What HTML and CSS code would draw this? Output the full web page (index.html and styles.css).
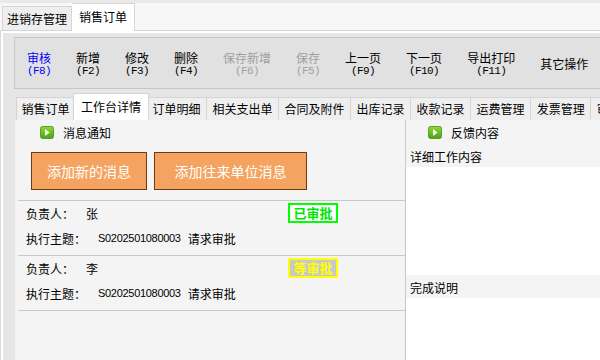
FILE: index.html
```html
<!DOCTYPE html>
<html lang="zh">
<head>
    <meta charset="UTF-8">
    <title>销售订单</title>
    <link rel="stylesheet" href="styles.css">
</head>
<body>
    <div class="top-bar">
        <div class="tab">进销存管理</div>
        <div class="tab active">销售订单</div>
    </div>

    <div class="main">
        <div class="toolbar">
            <div class="tool primary"><span>审核</span><span class="key">(F8)</span></div>
            <div class="tool"><span>新增</span><span class="key">(F2)</span></div>
            <div class="tool"><span>修改</span><span class="key">(F3)</span></div>
            <div class="tool"><span>删除</span><span class="key">(F4)</span></div>
            <div class="tool off"><span>保存新增</span><span class="key">(F6)</span></div>
            <div class="tool off"><span>保存</span><span class="key">(F5)</span></div>
            <div class="tool"><span>上一页</span><span class="key">(F9)</span></div>
            <div class="tool"><span>下一页</span><span class="key">(F10)</span></div>
            <div class="tool"><span>导出打印</span><span class="key">(F11)</span></div>
            <div class="tool"><span>其它操作</span></div>
        </div>

        <div class="sub-tabs">
            <div class="sub-tab">销售订单</div>
            <div class="sub-tab active">工作台详情</div>
            <div class="sub-tab">订单明细</div>
            <div class="sub-tab">相关支出单</div>
            <div class="sub-tab">合同及附件</div>
            <div class="sub-tab">出库记录</div>
            <div class="sub-tab">收款记录</div>
            <div class="sub-tab">运费管理</div>
            <div class="sub-tab">发票管理</div>
            <div class="sub-tab">审批记录</div>
        </div>

        <div class="panel">
            <div class="left">
                <div class="sec-head">
                    <svg class="play-icon" width="14" height="13" viewBox="0 0 14 13">
                        <defs>
                            <linearGradient id="g1" x1="0" y1="0" x2="0" y2="1">
                                <stop offset="0" stop-color="#8fd83c"/>
                                <stop offset="1" stop-color="#4f9e18"/>
                            </linearGradient>
                        </defs>
                        <rect x="0.5" y="0.5" width="13" height="12" rx="2" fill="url(#g1)" stroke="#58a020"/>
                        <path d="M5 3 L9.5 6.5 L5 10 Z" fill="#f4ffe0"/>
                    </svg>
                    <span>消息通知</span>
                </div>
                <div class="actions">
                    <button class="action action-new">添加新的消息</button>
                    <button class="action action-unit">添加往来单位消息</button>
                </div>
                <div class="msg-list">
                    <div class="msg">
                        <div class="msg-row">
                            <span class="msg-label">负责人：</span>
                            <span>张</span>
                            <span class="badge badge-done">已审批</span>
                        </div>
                        <div class="msg-row">
                            <span class="msg-label">执行主题：</span>
                            <span class="code">S0202501080003</span>
                            <span>请求审批</span>
                        </div>
                    </div>
                    <div class="msg">
                        <div class="msg-row">
                            <span class="msg-label">负责人：</span>
                            <span>李</span>
                            <span class="badge badge-wait">等审批</span>
                        </div>
                        <div class="msg-row">
                            <span class="msg-label">执行主题：</span>
                            <span class="code">S0202501080003</span>
                            <span>请求审批</span>
                        </div>
                    </div>
                </div>
            </div>

            <div class="right">
                <div class="sec-head">
                    <svg class="play-icon" width="14" height="13" viewBox="0 0 14 13">
                        <defs>
                            <linearGradient id="g2" x1="0" y1="0" x2="0" y2="1">
                                <stop offset="0" stop-color="#8fd83c"/>
                                <stop offset="1" stop-color="#4f9e18"/>
                            </linearGradient>
                        </defs>
                        <rect x="0.5" y="0.5" width="13" height="12" rx="2" fill="url(#g2)" stroke="#58a020"/>
                        <path d="M5 3 L9.5 6.5 L5 10 Z" fill="#f4ffe0"/>
                    </svg>
                    <span>反馈内容</span>
                </div>
                <div class="field-label">详细工作内容</div>
                <div class="field-box"></div>
                <div class="field-label">完成说明</div>
                <div class="field-box grow"></div>
            </div>
        </div>
    </div>
</body>
</html>
```

FILE: styles.css
```css
* {
    margin: 0;
    padding: 0;
    box-sizing: border-box;
}

body {
    font-family: "Noto Sans CJK SC", sans-serif;
    font-size: 12px;
    color: #000;
    background: #f0f0f0;
    width: 600px;
    height: 360px;
    overflow: hidden;
}

/* 顶部页签 */
.top-bar {
    height: 31px;
    display: flex;
    align-items: flex-end;
    padding-left: 2px;
    background: #f7f7f7;
    border-top: 3px solid #e9e9e9;
    border-bottom: 1px solid #d6d6d6;
}

.tab {
    height: 24px;
    line-height: 23px;
    padding: 0 4px;
    background: #eeeeee;
    border: 1px solid #d6d6d6;
    border-bottom: none;
    white-space: nowrap;
}

.tab.active {
    height: 28px;
    line-height: 26px;
    padding: 0 7px;
    margin-bottom: -1px;
    background: #fff;
    border-left: none;
}

.main {
    height: 329px;
    display: flex;
    flex-direction: column;
    padding: 6px 0 0 13px;
    background: #e6e6e6;
    border-left: 1px solid #dadada;
    box-shadow: inset 2px 2px #fff;
}

/* 工具栏 */
.toolbar {
    height: 52px;
    flex-shrink: 0;
    display: flex;
    align-items: center;
    gap: 25px;
    padding: 2px 0 0 12px;
    background: #e1e1e1;
    border: 1px solid #c6c6c6;
    border-right: none;
}

.tool {
    display: flex;
    flex-direction: column;
    align-items: center;
    line-height: 14px;
    white-space: nowrap;
}

.tool.primary {
    color: #0000ff;
}

.tool.off {
    color: #a0a0a0;
}

.key {
    font-family: "Liberation Mono", monospace;
    font-size: 11px;
    line-height: 13px;
    letter-spacing: -0.6px;
}

/* 子页签 */
.sub-tabs {
    height: 31px;
    flex-shrink: 0;
    display: flex;
    align-items: flex-end;
    padding-left: 2px;
    overflow: hidden;
}

.sub-tab {
    height: 23px;
    line-height: 22px;
    padding: 0 5.5px;
    background: #efefef;
    border: 1px solid #d4d4d4;
    border-bottom: none;
    border-left: none;
    white-space: nowrap;
}

.sub-tab:first-child {
    border-left: 1px solid #d4d4d4;
    padding: 0 4.5px;
}

.sub-tab.active {
    position: relative;
    height: 27px;
    line-height: 26px;
    padding: 0 7px;
    margin: 0 -2px;
    background: #fff;
    border-left: 1px solid #d4d4d4;
}

/* 内容区 */
.panel {
    flex: 1;
    display: flex;
    margin-left: 1px;
    background: #f4f4f4;
}

.left {
    width: 391px;
    padding-left: 3px;
    border-right: 1px solid #c8c8c8;
}

.right {
    flex: 1;
    display: flex;
    flex-direction: column;
}

.sec-head {
    height: 24px;
    display: flex;
    align-items: center;
    gap: 9px;
    padding-left: 22px;
}

.play-icon {
    display: block;
}

.actions {
    display: flex;
    gap: 7px;
    padding: 8px 0 10px 13px;
}

.action {
    height: 38px;
    font-family: inherit;
    font-size: 14px;
    color: #fff;
    background: #f4a460;
    border: 1px solid #6e3a0e;
}

.action-new {
    width: 116px;
}

.action-unit {
    width: 153px;
}

.msg-list {
    border-bottom: 1px solid #c8c8c8;
}

.msg {
    padding: 2px 0 7px 8px;
    border-top: 1px solid #c8c8c8;
}

.msg-row {
    height: 20px;
    display: flex;
    align-items: center;
}

.msg-row + .msg-row {
    margin-top: 5px;
}

.msg-label {
    margin-right: 12px;
}

.code {
    font-family: "Liberation Sans", sans-serif;
    font-size: 11px;
    letter-spacing: -0.3px;
    margin-right: 7px;
}

.badge {
    width: 50px;
    height: 20px;
    margin-left: auto;
    margin-right: 67px;
    border: 2px solid;
    font-size: 13px;
    font-weight: bold;
    line-height: 16px;
    text-align: center;
}

.badge-done {
    color: #00e600;
    border-color: #00ff00;
    background: #fff;
}

.badge-wait {
    color: #ffff00;
    border-color: #ffff00;
    background: #c8c8c8;
}

.field-label {
    height: 23px;
    padding: 2px 0 0 4px;
    line-height: 21px;
}

.field-box {
    height: 108px;
    background: #fff;
}

.field-box.grow {
    flex: 1;
}
```
